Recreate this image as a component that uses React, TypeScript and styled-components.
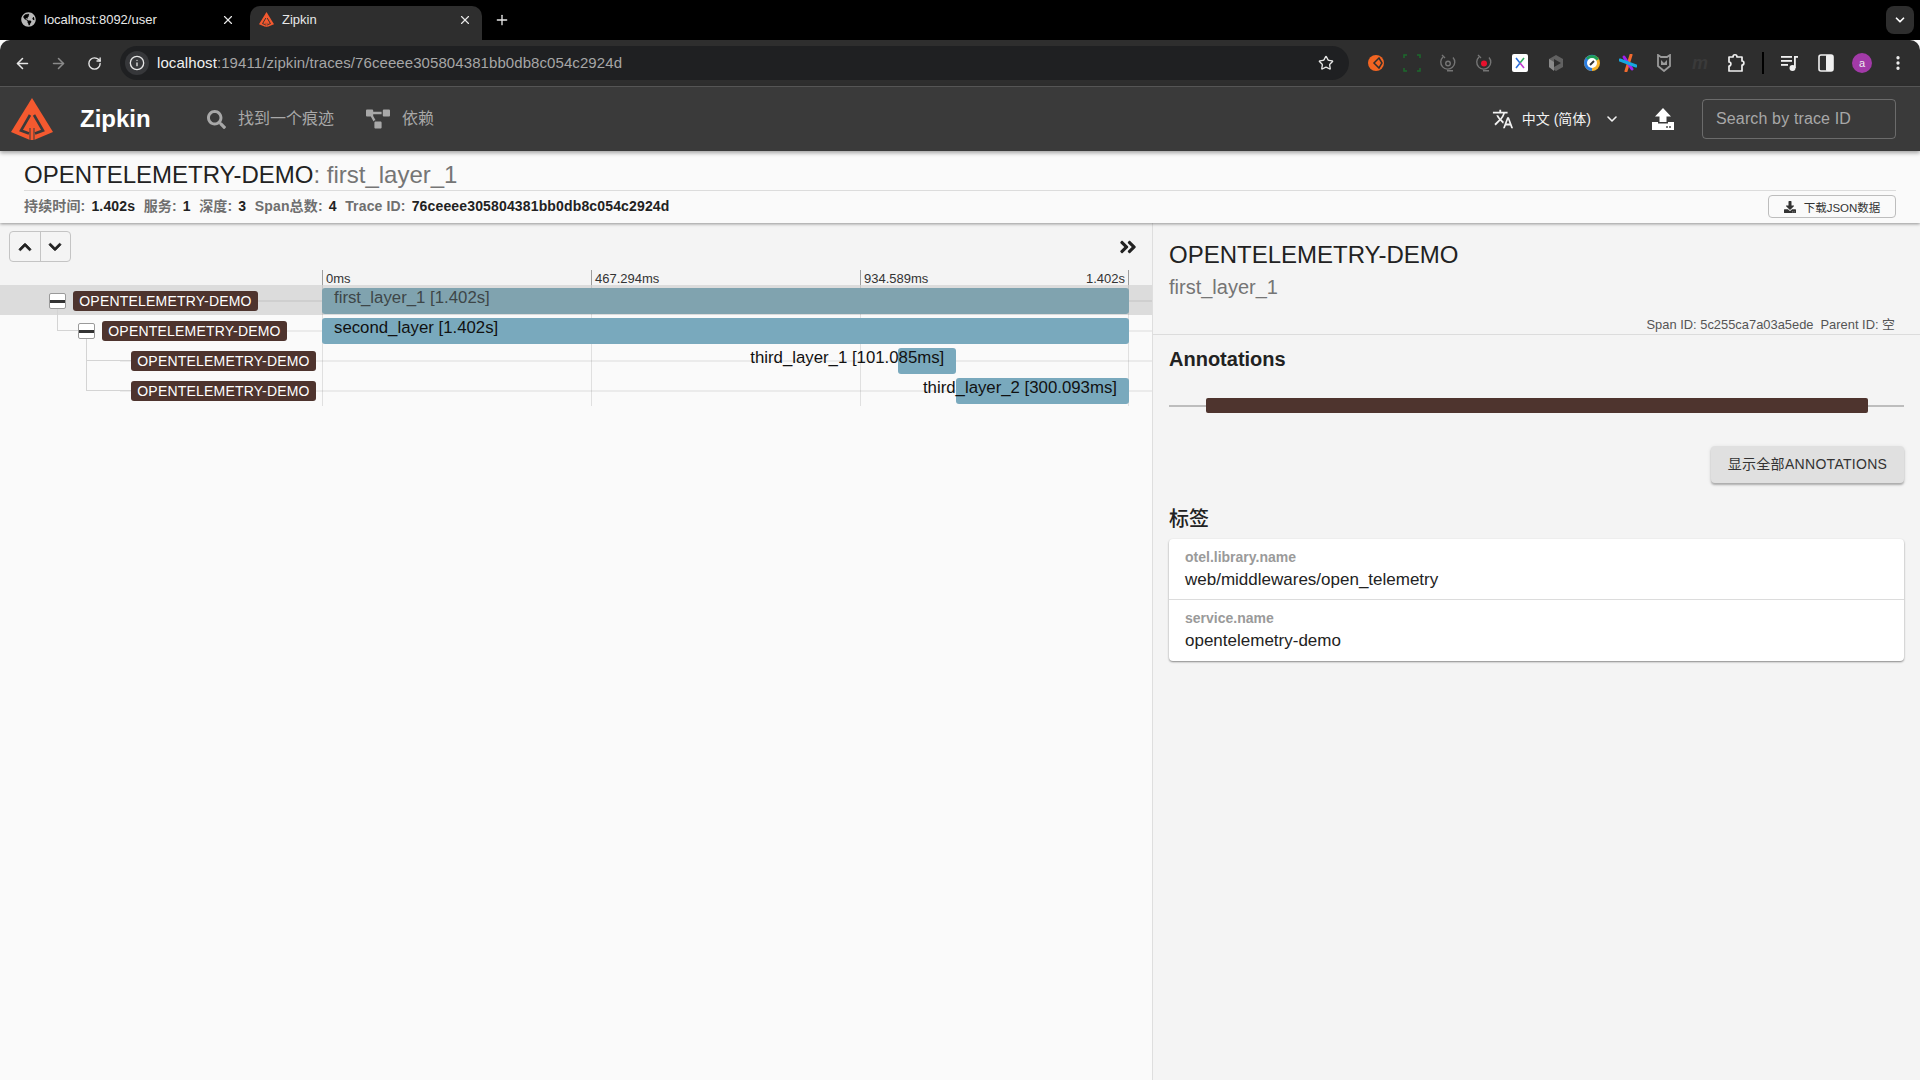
import React from "react";
import styled, { createGlobalStyle } from "styled-components";
import {
  ArrowLeft,
  ArrowRight,
  ChevronDown,
  EllipsisVertical,
  Info,
  Plus,
  RotateCw,
  Star,
  X,
} from "lucide-react";
import {
  FaAngleDoubleRight,
  FaChevronDown,
  FaChevronUp,
  FaDownload,
  FaGlobeAmericas,
  FaProjectDiagram,
  FaSearch,
} from "react-icons/fa";
import { MdTranslate } from "react-icons/md";

const GlobalStyle = createGlobalStyle`
  html, body {
    margin: 0;
    padding: 0;
    height: 100%;
    background: #fafafa;
    font-family: "Liberation Sans", "Noto Sans CJK SC", sans-serif;
  }
  * { box-sizing: border-box; }
`;

const Page = styled.div`
  width: 1920px;
  height: 1080px;
  display: flex;
  flex-direction: column;
  overflow: hidden;
`;

/* browser chrome */

const TabStrip = styled.div`
  height: 40px;
  background: #000;
  display: flex;
  align-items: flex-end;
  flex-shrink: 0;
  padding-left: 8px;
  position: relative;
`;

const Tab = styled.div<{ $active?: boolean }>`
  width: ${({ $active }) => ($active ? "232px" : "242px")};
  height: 34px;
  display: flex;
  align-items: center;
  gap: 8px;
  padding: 0 ${({ $active }) => ($active ? "10px" : "15px")} 7px ${({ $active }) => ($active ? "9px" : "13px")};
  border-radius: 10px 10px 0 0;
  background: ${({ $active }) => ($active ? "#2e2e2e" : "transparent")};
  color: #e8e8e8;
  font-size: 13px;
`;

const TabTitle = styled.span`
  flex: 1;
  white-space: nowrap;
`;

const NewTab = styled.div`
  width: 20px;
  margin: 0 0 7px 12px;
  height: 27px;
  display: flex;
  align-items: center;
  color: #e8e8e8;
`;

const TabMenu = styled.div`
  margin: 0 6px 6px auto;
  width: 28px;
  height: 28px;
  border-radius: 8px;
  background: #2e2e2e;
  display: flex;
  align-items: center;
  justify-content: center;
  color: #fff;
`;

const BrowserBar = styled.div`
  height: 46px;
  background: #2e2e2e;
  border-radius: 10px 10px 0 0;
  display: flex;
  align-items: center;
  flex-shrink: 0;
  padding-left: 4px;
  color: #e6e6e6;
`;

const NavButton = styled.div<{ $dim?: boolean }>`
  width: 36px;
  display: flex;
  justify-content: center;
  color: ${({ $dim }) => ($dim ? "#8a8a8a" : "#e6e6e6")};
`;

const AddressBar = styled.div`
  width: 1229px;
  height: 34px;
  margin-left: 8px;
  background: #1f2022;
  border-radius: 17px;
  display: flex;
  align-items: center;
  padding: 0 15px 0 5px;
  font-size: 15px;
  letter-spacing: 0.08px;
`;

const SiteInfo = styled.div`
  width: 24px;
  height: 24px;
  border-radius: 50%;
  background: #36373a;
  display: flex;
  align-items: center;
  justify-content: center;
  margin-right: 8px;
`;

const Url = styled.div`
  flex: 1;
  color: #a6a6a6;
  padding-bottom: 1px;
  b {
    font-weight: 400;
    color: #f0f0f0;
  }
`;

const Extensions = styled.div`
  display: flex;
  align-items: center;
  margin-left: 9px;
`;

const ExtSlot = styled.div`
  width: 36px;
  height: 24px;
  display: flex;
  align-items: center;
  justify-content: center;
  color: #f0f0f0;
`;

const FadedExt = styled.span`
  font-size: 18px;
  font-weight: 700;
  font-style: italic;
  color: #3a3a3a;
`;

const ExtDivider = styled.div`
  width: 2px;
  height: 22px;
  background: #000;
  margin: 0 8px;
`;

const Avatar = styled.div`
  width: 20px;
  height: 20px;
  border-radius: 50%;
  background: #a23aa8;
  color: #eee;
  font-size: 11px;
  display: flex;
  align-items: center;
  justify-content: center;
`;

/* zipkin app bar */

const AppBar = styled.header`
  height: 65px;
  background: #3a3a3a;
  border-top: 1px solid #555;
  box-shadow: 0 2px 4px rgba(0, 0, 0, 0.35);
  display: flex;
  align-items: center;
  flex-shrink: 0;
  position: relative;
  z-index: 3;
  padding: 0 24px 0 11px;
`;

const Brand = styled.div`
  font-size: 24px;
  font-weight: 700;
  color: #fff;
  margin-left: 27px;
  width: 127px;
`;

const NavLink = styled.div`
  display: flex;
  align-items: center;
  gap: 12px;
  color: #a8a8a8;
  font-size: 16px;
  margin-right: 32px;
  span {
    padding-bottom: 4px;
  }
`;

const Language = styled.div`
  margin-left: auto;
  display: flex;
  align-items: center;
  color: #f2f2f2;
  font-size: 14px;
  gap: 9px;
  span {
    padding-bottom: 3px;
    margin-left: -1px;
  }
  svg:last-child {
    margin-left: 4px;
  }
`;

const UploadButton = styled.div`
  width: 22px;
  height: 22px;
  margin: 0 28px 0 32px;
  display: flex;
`;

const SearchBox = styled.div`
  width: 194px;
  height: 40px;
  border: 1px solid rgba(255, 255, 255, 0.25);
  border-radius: 4px;
  color: #a8a8a8;
  font-size: 16px;
  letter-spacing: 0.14px;
  display: flex;
  align-items: center;
  padding-left: 13px;
`;

/* trace summary */

const Summary = styled.section`
  height: 72px;
  background: #fafafa;
  padding: 0 24px;
  box-shadow: 0 1px 3px rgba(0, 0, 0, 0.4);
  flex-shrink: 0;
  position: relative;
  z-index: 2;
`;

const TraceTitle = styled.div`
  height: 40px;
  border-bottom: 1px solid #dcdcdc;
  font-size: 24px;
  line-height: 47px;
  color: #222;
  white-space: nowrap;
  span {
    color: #757575;
  }
`;

const SummaryRow = styled.div`
  height: 31px;
  display: flex;
  align-items: center;
  justify-content: space-between;
`;

const Stats = styled.div`
  display: flex;
  align-items: baseline;
  gap: 8.5px;
  padding-bottom: 2px;
  font-size: 14px;
  line-height: 18px;
  font-weight: 700;
  letter-spacing: 0.15px;
  color: #6f6f6f;
  b {
    color: #222;
    margin-left: 6px;
  }
`;

const DownloadButton = styled.div`
  width: 128px;
  height: 23px;
  border: 1px solid #bdbdbd;
  border-radius: 4px;
  display: flex;
  align-items: center;
  justify-content: center;
  gap: 8px;
  font-size: 11.5px;
  color: #333;
`;

/* main split */

const Main = styled.main`
  flex: 1;
  display: flex;
  min-height: 0;
`;

const TimelinePane = styled.div`
  width: 1152px;
  background: #fafafa;
`;

const TimelineHead = styled.div`
  height: 62px;
  background: #f4f4f4;
  display: flex;
  flex-direction: column;
`;

const Controls = styled.div`
  height: 47px;
  padding: 8px 14px 0 9px;
  display: flex;
  justify-content: space-between;
`;

const ButtonPair = styled.div`
  width: 62px;
  height: 31px;
  border: 1px solid #c4c4c4;
  border-radius: 4px;
  display: flex;
  color: #222;
`;

const PairButton = styled.div`
  flex: 1;
  display: flex;
  align-items: center;
  justify-content: center;
  svg {
    stroke: currentColor;
    stroke-width: 30px;
  }
  & + & {
    border-left: 1px solid #c4c4c4;
  }
`;

const ExpandAll = styled.div`
  width: 20px;
  height: 31px;
  display: flex;
  align-items: center;
  color: #222;
`;

const Axis = styled.div`
  height: 15px;
  margin: 0 23px 0 322px;
  display: grid;
  grid-template-columns: repeat(3, 1fr);
  font-size: 13px;
  line-height: 18px;
  color: #333;
  white-space: nowrap;
`;

const AxisCell = styled.div<{ $last?: boolean }>`
  border-left: 1px solid #9e9e9e;
  border-right: ${({ $last }) => ($last ? "1px solid #9e9e9e" : "none")};
  padding: 0 3px;
  display: flex;
  justify-content: space-between;
`;

const Rows = styled.div`
  position: relative;
`;

const GridLines = styled.div`
  position: absolute;
  top: 0;
  height: 121px;
  left: 322px;
  right: 23px;
  display: grid;
  grid-template-columns: repeat(3, 1fr);
  z-index: 1;
  pointer-events: none;
`;

const GridCell = styled.div<{ $last?: boolean }>`
  border-left: 1px solid rgba(0, 0, 0, 0.1);
  border-right: ${({ $last }) => ($last ? "1px solid rgba(0, 0, 0, 0.1)" : "none")};
`;

const Row = styled.div<{ $selected?: boolean; $lineFrom: number }>`
  height: 30px;
  position: relative;
  display: grid;
  grid-template-columns: 322px 1fr 23px;
  background: ${({ $selected }) => ($selected ? "#dcdcdc" : "transparent")};
  &::before {
    content: "";
    position: absolute;
    left: ${({ $lineFrom }) => $lineFrom}px;
    right: 0;
    top: 15px;
    height: 2px;
    background: ${({ $selected }) => ($selected ? "#cfcfcf" : "#ebebeb")};
  }
`;

const RowLabel = styled.div<{ $indent: number }>`
  position: relative;
  z-index: 2;
  display: flex;
  align-items: center;
  justify-content: flex-end;
  padding-top: 2px;
  gap: 7px;
  padding-right: ${({ $indent }) => $indent}px;
`;

const Toggle = styled.div`
  width: 17px;
  height: 16px;
  border: 1px solid #9a9a9a;
  border-radius: 2px;
  background: #fff;
  position: relative;
  &::after {
    content: "";
    position: absolute;
    left: 0;
    right: 0;
    top: 5.5px;
    height: 3px;
    background: #333;
  }
`;

const ServiceBadge = styled.div`
  width: 185px;
  height: 20px;
  background: #4e342e;
  border-radius: 3px;
  color: #fff;
  font-size: 14px;
  letter-spacing: 0.2px;
  line-height: 20px;
  text-align: center;
  white-space: nowrap;
`;

const Elbow = styled.div<{ $left: number; $top: number; $w: number; $h: number }>`
  position: absolute;
  left: ${({ $left }) => $left}px;
  top: ${({ $top }) => $top}px;
  width: ${({ $w }) => $w}px;
  height: ${({ $h }) => $h}px;
  border-left: 1px solid #d4d4d4;
  border-bottom: 1px solid #d4d4d4;
  z-index: -1;
`;

const Track = styled.div`
  position: relative;
  z-index: 2;
`;

const Bar = styled.div<{ $selected?: boolean }>`
  position: absolute;
  top: 3px;
  height: 26px;
  border-radius: 3px;
  background: ${({ $selected }) => ($selected ? "#80a3af" : "#79a9bd")};
`;

const BarLabel = styled.span<{ $outside?: boolean; $selected?: boolean }>`
  position: absolute;
  top: -1px;
  left: ${({ $outside }) => ($outside ? "auto" : "12px")};
  right: ${({ $outside }) => ($outside ? "12px" : "auto")};
  font-size: 16.8px;
  line-height: 22px;
  white-space: nowrap;
  color: ${({ $selected }) => ($selected ? "#3d4648" : "#111")};
`;

/* span detail */

const DetailPane = styled.aside`
  flex: 1;
  background: #f4f4f4;
  border-left: 1px solid #dedede;
`;

const DetailHead = styled.div`
  height: 112px;
  padding: 17px 16px 0 16px;
  border-bottom: 1px solid #dcdcdc;
  display: flex;
  flex-direction: column;
`;

const SpanService = styled.div`
  font-size: 24px;
  line-height: 30px;
  color: #222;
`;

const SpanName = styled.div`
  font-size: 20px;
  line-height: 26px;
  margin-top: 4px;
  color: #757575;
`;

const SpanIds = styled.div`
  margin-top: auto;
  padding: 0 9px 2px 0;
  font-size: 12.9px;
  line-height: 14px;
  color: #555;
  display: flex;
  justify-content: flex-end;
  gap: 7px;
`;

const DetailBody = styled.div`
  padding: 12px 16px 0 16px;
`;

const SectionTitle = styled.div<{ $medium?: boolean }>`
  font-size: 20px;
  line-height: 24px;
  font-weight: ${({ $medium }) => ($medium ? 500 : 700)};
  color: #222;
`;

const AnnotationTrack = styled.div`
  margin-top: 27px;
  height: 15px;
  position: relative;
  display: flex;
  justify-content: center;
  &::before {
    content: "";
    position: absolute;
    left: 0;
    right: 0;
    top: 7px;
    height: 2px;
    background: #bdbdbd;
  }
`;

const AnnotationBar = styled.div`
  width: 662px;
  height: 15px;
  background: #4e342e;
  border-radius: 2px;
  position: relative;
`;

const ButtonRow = styled.div`
  display: flex;
  justify-content: flex-end;
  margin-top: 33px;
`;

const ShowAllButton = styled.div`
  width: 193px;
  height: 37px;
  padding-bottom: 3px;
  background: #e0e0e0;
  border-radius: 4px;
  box-shadow: 0 2px 2px rgba(0, 0, 0, 0.25), 0 1px 4px rgba(0, 0, 0, 0.1);
  font-size: 14px;
  color: #333;
  display: flex;
  align-items: center;
  justify-content: center;
  letter-spacing: 0.3px;
`;

const TagsTitle = styled.div`
  margin-top: 24px;
`;

const TagCard = styled.div`
  margin-top: 8px;
  background: #fff;
  border-radius: 4px;
  box-shadow: 0 1px 2px rgba(0, 0, 0, 0.45);
`;

const TagRow = styled.div`
  height: 60px;
  padding: 10px 16px 0;
  & + & {
    height: 62px;
    border-top: 1px solid #dcdcdc;
  }
`;

const TagKey = styled.div`
  font-size: 14px;
  line-height: 16px;
  font-weight: 700;
  color: #9a9a9a;
`;

const TagValue = styled.div`
  font-size: 17px;
  line-height: 20px;
  margin-top: 5px;
  color: #222;
`;

/* drawings */

const ZipkinLogo = ({ size = 42, bg = "#3a3a3a" }: { size?: number; bg?: string }) => (
  <svg width={size} height={size} viewBox="0 0 42 42" style={{ flexShrink: 0 }}>
    <path d="M21 0 L42 34 L23 42 L19 42 L0 34 Z" fill="#f4592f" />
    <path
      d="M19 17 L10 32.5 L18 35.5 M23 17 L32 32.5 L24 35.5"
      fill="none"
      stroke={bg}
      strokeWidth="2.6"
    />
    <path d="M19 30 V42 M23 30 V42" stroke={bg} strokeWidth="1" />
  </svg>
);

const UploadIcon = () => (
  <svg width="22" height="22" viewBox="0 0 22 22">
    <path d="M11 0 L19 8.5 H14.5 V14 H7.5 V8.5 H3 Z" fill="#fff" />
    <path d="M0 14 H6 V15.5 H16 V14 H22 V22 H0 Z" fill="#fff" />
    <rect x="14" y="18" width="2" height="2" fill="#777" />
    <rect x="17" y="18" width="2" height="2" fill="#777" />
  </svg>
);

const ExtOrange = () => (
  <svg width="16" height="18" viewBox="0 0 16 18">
    <circle cx="8" cy="9" r="8" fill="#f26522" />
    <path d="M11 4 L6 9 L11 14 L14 9 Z" fill="none" stroke="#2e2e2e" strokeWidth="1.5" />
  </svg>
);

const ExtFrame = () => (
  <svg width="18" height="18" viewBox="0 0 18 18" fill="none" stroke="#1c6b2c" strokeWidth="1.5">
    <path d="M1 4 V1 H4 M14 1 H17 V4 M17 14 V17 H14 M4 17 H1 V14" />
  </svg>
);

const ExtTimer = ({ dot }: { dot: string }) => (
  <svg width="18" height="18" viewBox="0 0 18 18" fill="none" stroke="#757575" strokeWidth="1.4">
    <path d="M4 3 A7 7 0 1 0 14 3.5" />
    <path d="M3 1 L6 4 M8 16.8 H14" />
    <circle cx="9" cy="9.5" r="2.3" fill={dot} stroke={dot === "none" ? "#757575" : dot} />
  </svg>
);

const ExtCross = () => (
  <svg width="16" height="18" viewBox="0 0 16 18">
    <rect width="16" height="18" rx="2" fill="#fff" />
    <path d="M4 4 L8 9 L4 14" fill="none" stroke="#2a6fdb" strokeWidth="1.6" />
    <path d="M12 4 L8 9" fill="none" stroke="#2fae5f" strokeWidth="1.6" />
    <path d="M8 9 L12 14" fill="none" stroke="#c23bd0" strokeWidth="1.6" />
  </svg>
);

const ExtPlay = () => (
  <svg width="16" height="18" viewBox="0 0 16 18">
    <path d="M8 1 L15 5 V13 L8 17 L1 13 V5 Z" fill="#616161" />
    <path d="M6 5 L13 9 L6 13 Z" fill="#2e2e2e" />
    <path d="M1 5 L6 8 V17 L1 13 Z" fill="#8a8a8a" />
  </svg>
);

const ExtCompass = () => (
  <svg width="18" height="18" viewBox="0 0 18 18">
    <circle cx="9" cy="9" r="8" fill="#f6b32b" />
    <path d="M1 9 A8 8 0 0 1 13 2 L9 9 L9 17 A8 8 0 0 1 1 9 Z" fill="#2a7de1" />
    <path d="M3 4 A8 8 0 0 1 16 5 L9 9 Z" fill="#1e9e58" />
    <circle cx="9" cy="9" r="5" fill="#fff" />
    <path d="M7 11 L11 7" stroke="#333" strokeWidth="2" />
  </svg>
);

const ExtStar = () => (
  <svg width="18" height="18" viewBox="0 0 18 18" strokeWidth="3" strokeLinecap="round">
    <path d="M12 1 L7 17" stroke="#f26a2e" />
    <path d="M5 3 L13 15" stroke="#a020f0" />
    <path d="M1 6 L17 12" stroke="#16a8e0" />
  </svg>
);

const ExtShield = () => (
  <svg width="14" height="18" viewBox="0 0 14 18" fill="none" stroke="#9a9a9a" strokeWidth="1.8">
    <path d="M1 1 L4 3 H10 L13 1 V12 L7 17 L1 12 Z" />
    <path d="M4 6 L7 9 L10 6 V11 H4 Z" fill="#9a9a9a" stroke="none" />
  </svg>
);

const ExtPuzzle = () => (
  <svg width="18" height="20" viewBox="0 0 18 20" fill="none" stroke="#f0f0f0" strokeWidth="1.7" strokeLinejoin="round">
    <path d="M2 4 H6 C6 1 10 1 10 4 H15 V8 C17.5 8 17.5 12 15 12 V18 H2 V13 C4.5 13 4.5 9 2 9 Z" />
  </svg>
);

const ExtMedia = () => (
  <svg width="18" height="18" viewBox="0 0 18 18" fill="#f0f0f0">
    <rect x="0" y="2" width="11" height="1.8" />
    <rect x="0" y="6" width="11" height="1.8" />
    <rect x="0" y="10" width="7" height="1.8" />
    <rect x="13" y="2" width="1.8" height="12" />
    <rect x="13" y="2" width="4" height="1.8" />
    <circle cx="11.5" cy="14" r="3" />
  </svg>
);

const ExtSide = () => (
  <svg width="16" height="18" viewBox="0 0 16 18">
    <rect x="1" y="1" width="14" height="16" rx="2" fill="none" stroke="#f0f0f0" strokeWidth="1.6" />
    <rect x="8" y="1" width="7" height="16" rx="1" fill="#f0f0f0" />
  </svg>
);

type SpanRow = {
  depth: number;
  indent: number;
  expandable: boolean;
  start: number;
  width: number;
  label: string;
  outside?: boolean;
  selected?: boolean;
};

const spans: SpanRow[] = [
  { depth: 0, indent: 64, expandable: true, start: 0, width: 100, label: "first_layer_1 [1.402s]", selected: true },
  { depth: 1, indent: 35, expandable: true, start: 0, width: 100, label: "second_layer [1.402s]" },
  { depth: 2, indent: 6, expandable: false, start: 71.4, width: 7.2, label: "third_layer_1 [101.085ms]", outside: true },
  { depth: 2, indent: 6, expandable: false, start: 78.6, width: 21.4, label: "third_layer_2 [300.093ms]", outside: true },
];

const elbows = [
  null,
  { $left: 57, $top: -6, $w: 21, $h: 22 },
  { $left: 86, $top: -6, $w: 45, $h: 22 },
  { $left: 86, $top: -14, $w: 45, $h: 30 },
];

export default function App() {
  return (
    <Page>
      <GlobalStyle />

      <TabStrip>
        <Tab>
          <FaGlobeAmericas size={15} color="#b8b8b8" />
          <TabTitle>localhost:8092/user</TabTitle>
          <X size={14} />
        </Tab>
        <Tab $active>
          <ZipkinLogo size={15} bg="#2e2e2e" />
          <TabTitle>Zipkin</TabTitle>
          <X size={14} />
        </Tab>
        <NewTab>
          <Plus size={16} />
        </NewTab>
        <TabMenu>
          <ChevronDown size={14} strokeWidth={3} />
        </TabMenu>
      </TabStrip>

      <BrowserBar>
        <NavButton>
          <ArrowLeft size={17} strokeWidth={2.2} />
        </NavButton>
        <NavButton $dim>
          <ArrowRight size={17} strokeWidth={2.2} />
        </NavButton>
        <NavButton>
          <RotateCw size={15} strokeWidth={2.2} />
        </NavButton>
        <AddressBar>
          <SiteInfo>
            <Info size={16} strokeWidth={2} />
          </SiteInfo>
          <Url>
            <b>localhost</b>:19411/zipkin/traces/76ceeee305804381bb0db8c054c2924d
          </Url>
          <Star size={16} strokeWidth={2} />
        </AddressBar>
        <Extensions>
          <ExtSlot><ExtOrange /></ExtSlot>
          <ExtSlot><ExtFrame /></ExtSlot>
          <ExtSlot><ExtTimer dot="none" /></ExtSlot>
          <ExtSlot><ExtTimer dot="#e8112d" /></ExtSlot>
          <ExtSlot><ExtCross /></ExtSlot>
          <ExtSlot><ExtPlay /></ExtSlot>
          <ExtSlot><ExtCompass /></ExtSlot>
          <ExtSlot><ExtStar /></ExtSlot>
          <ExtSlot><ExtShield /></ExtSlot>
          <ExtSlot><FadedExt>m</FadedExt></ExtSlot>
          <ExtSlot><ExtPuzzle /></ExtSlot>
          <ExtDivider />
          <ExtSlot><ExtMedia /></ExtSlot>
          <ExtSlot><ExtSide /></ExtSlot>
          <ExtSlot><Avatar>a</Avatar></ExtSlot>
          <ExtSlot><EllipsisVertical size={18} strokeWidth={2.4} /></ExtSlot>
        </Extensions>
      </BrowserBar>

      <AppBar>
        <ZipkinLogo />
        <Brand>Zipkin</Brand>
        <NavLink>
          <FaSearch size={19} />
          <span>找到一个痕迹</span>
        </NavLink>
        <NavLink>
          <FaProjectDiagram size={24} />
          <span>依赖</span>
        </NavLink>
        <Language>
          <MdTranslate size={22} />
          <span>中文 (简体)</span>
          <ChevronDown size={16} strokeWidth={2.4} />
        </Language>
        <UploadButton>
          <UploadIcon />
        </UploadButton>
        <SearchBox>Search by trace ID</SearchBox>
      </AppBar>

      <Summary>
        <TraceTitle>
          OPENTELEMETRY-DEMO<span>: first_layer_1</span>
        </TraceTitle>
        <SummaryRow>
          <Stats>
            <div>持续时间:<b>1.402s</b></div>
            <div>服务:<b>1</b></div>
            <div>深度:<b>3</b></div>
            <div>Span总数:<b>4</b></div>
            <div>Trace ID:<b>76ceeee305804381bb0db8c054c2924d</b></div>
          </Stats>
          <DownloadButton>
            <FaDownload size={12} />
            下载JSON数据
          </DownloadButton>
        </SummaryRow>
      </Summary>

      <Main>
        <TimelinePane>
          <TimelineHead>
            <Controls>
              <ButtonPair>
                <PairButton><FaChevronUp size={14} /></PairButton>
                <PairButton><FaChevronDown size={14} /></PairButton>
              </ButtonPair>
              <ExpandAll><FaAngleDoubleRight size={20} /></ExpandAll>
            </Controls>
            <Axis>
              <AxisCell>0ms</AxisCell>
              <AxisCell>467.294ms</AxisCell>
              <AxisCell $last>
                <span>934.589ms</span>
                <span>1.402s</span>
              </AxisCell>
            </Axis>
          </TimelineHead>
          <Rows>
            <GridLines>
              <GridCell />
              <GridCell />
              <GridCell $last />
            </GridLines>
            {spans.map((span, i) => {
              const elbow = elbows[i];
              return (
                <Row key={span.label} $selected={span.selected} $lineFrom={100 + span.depth * 10}>
                  <RowLabel $indent={span.indent}>
                    {elbow && <Elbow {...elbow} />}
                    {span.expandable && <Toggle />}
                    <ServiceBadge>OPENTELEMETRY-DEMO</ServiceBadge>
                  </RowLabel>
                  <Track>
                    <Bar
                      $selected={span.selected}
                      style={{ left: `${span.start}%`, width: `${span.width}%` }}
                    >
                      <BarLabel $outside={span.outside} $selected={span.selected}>
                        {span.label}
                      </BarLabel>
                    </Bar>
                  </Track>
                </Row>
              );
            })}
          </Rows>
        </TimelinePane>

        <DetailPane>
          <DetailHead>
            <SpanService>OPENTELEMETRY-DEMO</SpanService>
            <SpanName>first_layer_1</SpanName>
            <SpanIds>
              <span>Span ID: 5c255ca7a03a5ede</span>
              <span>Parent ID: 空</span>
            </SpanIds>
          </DetailHead>
          <DetailBody>
            <SectionTitle>Annotations</SectionTitle>
            <AnnotationTrack>
              <AnnotationBar />
            </AnnotationTrack>
            <ButtonRow>
              <ShowAllButton>显示全部ANNOTATIONS</ShowAllButton>
            </ButtonRow>
            <TagsTitle>
              <SectionTitle $medium>标签</SectionTitle>
            </TagsTitle>
            <TagCard>
              <TagRow>
                <TagKey>otel.library.name</TagKey>
                <TagValue>web/middlewares/open_telemetry</TagValue>
              </TagRow>
              <TagRow>
                <TagKey>service.name</TagKey>
                <TagValue>opentelemetry-demo</TagValue>
              </TagRow>
            </TagCard>
          </DetailBody>
        </DetailPane>
      </Main>
    </Page>
  );
}
